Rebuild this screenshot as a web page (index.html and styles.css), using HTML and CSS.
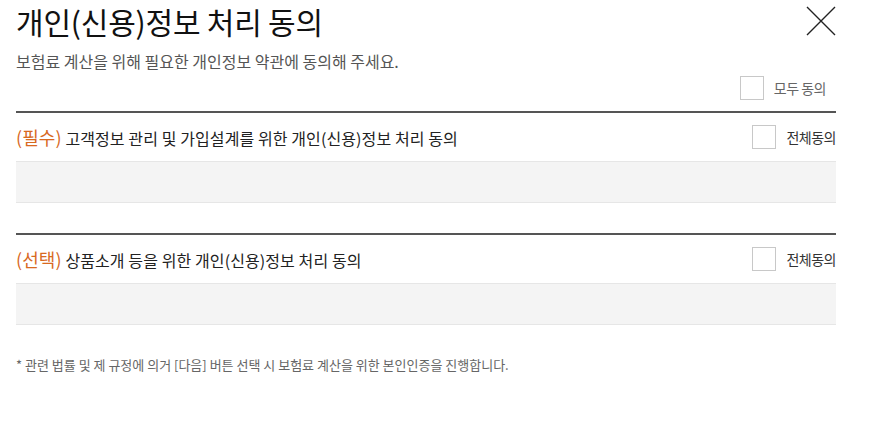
FILE: index.html
```html
<!DOCTYPE html>
<html>
<head>
  <meta charset="utf-8">
  <meta name="viewport" content="width=device-width, initial-scale=1">
  <title>개인(신용)정보 처리 동의</title>
  <link rel="stylesheet" href="styles.css">
</head>
<body>
  <div class="wrap">
    <header class="head">
      <div>
        <h2>개인(신용)정보 처리 동의</h2>
        <p class="desc">보험료 계산을 위해 필요한 개인정보 약관에 동의해 주세요.</p>
      </div>
      <button type="button" class="close" aria-label="닫기">
        <svg width="30" height="30" viewBox="0 0 30 30"><path d="M1 1L29 29M29 1L1 29" stroke="#222" stroke-width="1.4" fill="none"/></svg>
      </button>
    </header>
    <div class="all">
      <label class="check"><span class="box"></span>모두 동의</label>
    </div>

    <section class="agree">
      <div class="agree-head">
        <h3><em>(필수)</em> 고객정보 관리 및 가입설계를 위한 개인(신용)정보 처리 동의</h3>
        <label class="check"><span class="box"></span>전체동의</label>
      </div>
      <div class="agree-body"></div>
    </section>

    <section class="agree">
      <div class="agree-head">
        <h3><em>(선택)</em> 상품소개 등을 위한 개인(신용)정보 처리 동의</h3>
        <label class="check"><span class="box"></span>전체동의</label>
      </div>
      <div class="agree-body"></div>
    </section>

    <p class="note">* 관련 법률 및 제 규정에 의거 [다음] 버튼 선택 시 보험료 계산을 위한 본인인증을 진행합니다.</p>
  </div>
</body>
</html>
```

FILE: styles.css
```css
body {
  margin: 0;
  font-family: "Noto Sans CJK KR", "Noto Sans", sans-serif;
  color: #222;
  background: #fff;
}
.wrap {
  width: 820px;
  padding: 0 16px;
}
.head {
  display: flex;
  justify-content: space-between;
  align-items: flex-start;
}
h2 {
  margin: 0;
  font-size: 30px;
  font-weight: 400;
  line-height: 42px;
  letter-spacing: -0.2px;
  color: #111;
}
.desc {
  margin: 8px 0 0;
  font-size: 16px;
  line-height: 22px;
  color: #555;
}
.close {
  border: none;
  background: none;
  padding: 0;
  margin-top: 6px;
  width: 30px;
  height: 30px;
  cursor: pointer;
}
.close svg {
  display: block;
}
.all {
  display: flex;
  justify-content: flex-end;
  padding: 4px 10px 11px 0;
  border-bottom: 2px solid #555;
}
.check {
  display: flex;
  align-items: center;
  gap: 10px;
  font-size: 14px;
  color: #666;
  letter-spacing: -0.5px;
}
.box {
  display: block;
  width: 22px;
  height: 22px;
  border: 1px solid #c8c8c8;
  background: #fff;
}
.agree {
  margin-bottom: 30px;
}
.agree + .agree {
  border-top: 2px solid #555;
}
.agree-head {
  display: flex;
  justify-content: space-between;
  align-items: center;
  height: 48px;
}
.agree-head .check {
  color: #333;
}
h3 {
  margin: 0;
  font-size: 16px;
  font-weight: 400;
  letter-spacing: 0.1px;
  color: #222;
}
h3 em {
  font-style: normal;
  font-size: 18px;
  color: #d8691f;
}
.agree-body {
  height: 40px;
  background: #f4f4f4;
  border-top: 1px solid #e6e6e6;
  border-bottom: 1px solid #e6e6e6;
}
.note {
  margin: 0;
  font-size: 13px;
  color: #666;
}
```
